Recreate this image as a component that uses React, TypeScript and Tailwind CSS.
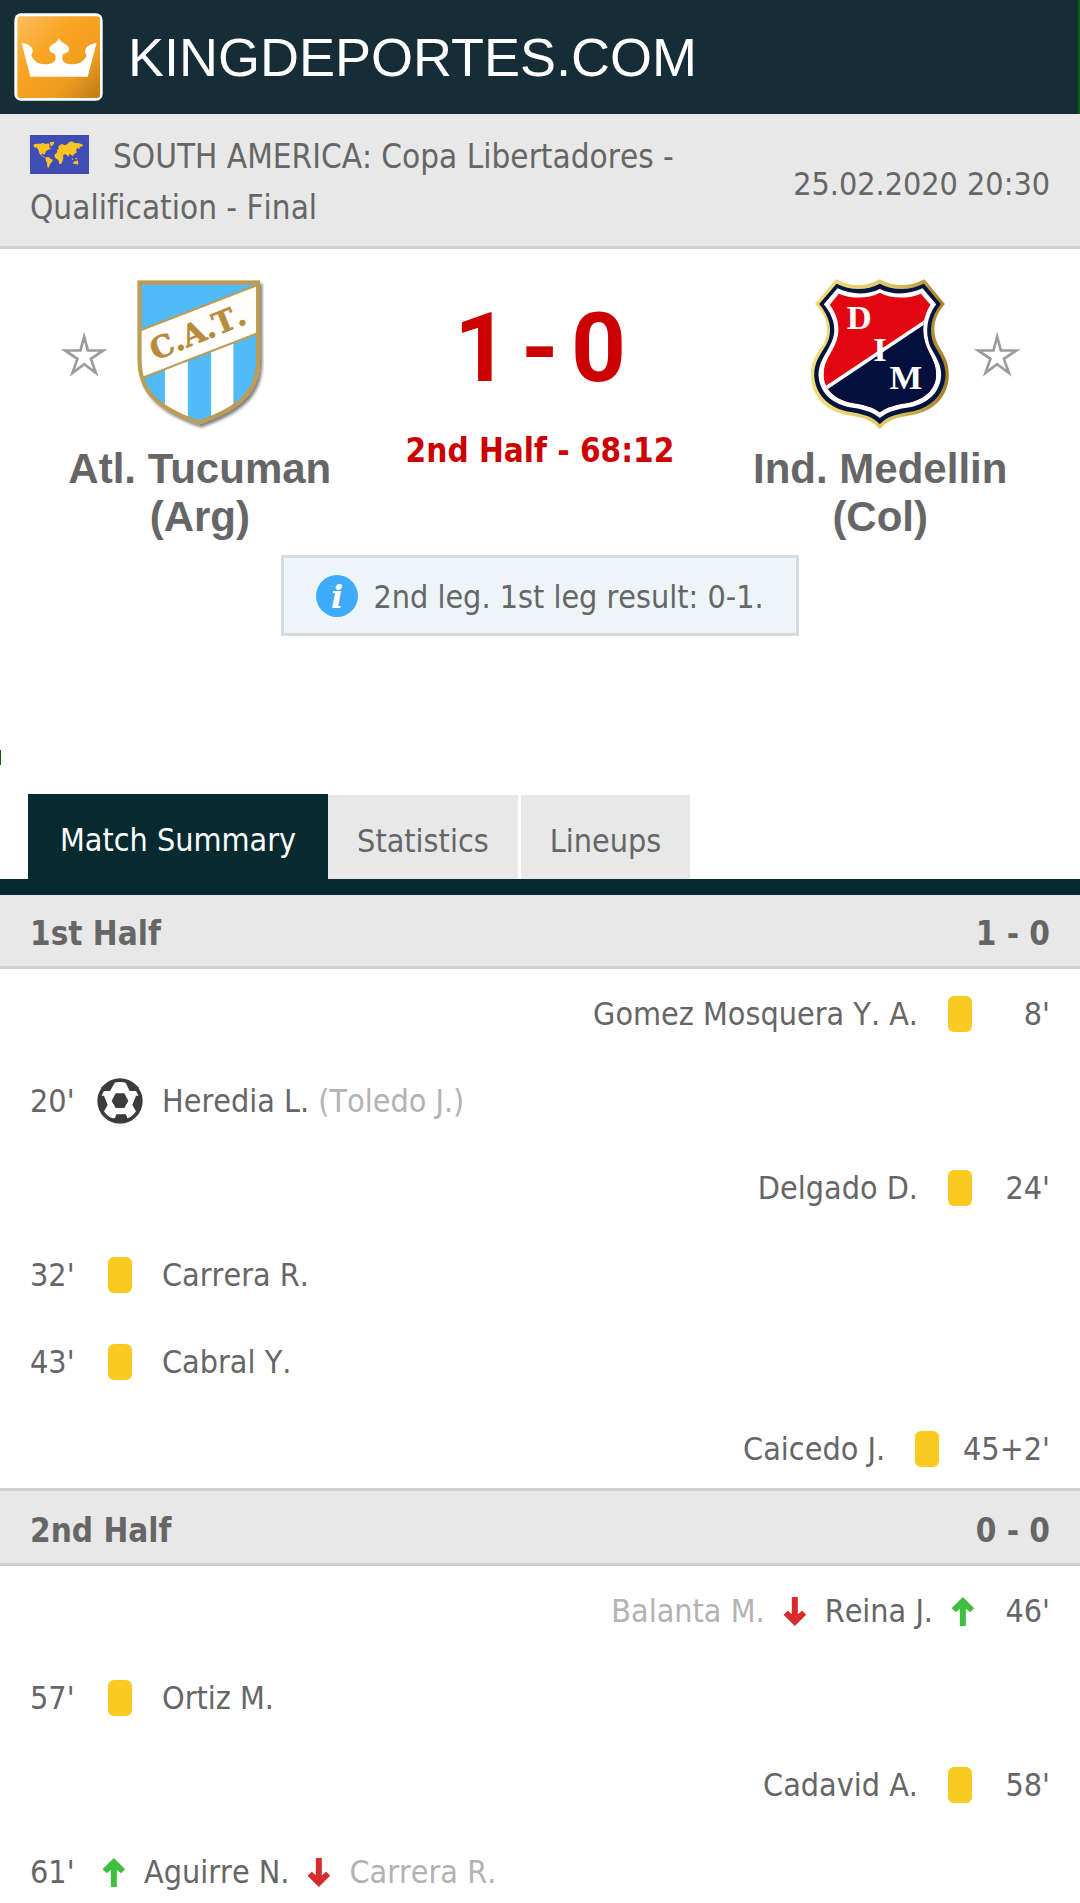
import { useState } from "react";

type EventKind = "yellow" | "goal" | "sub";
type MatchEvent = {
  side: "home" | "away";
  time: string;
  kind: EventKind;
  player: string;
  other?: string;
};
type Half = { title: string; score: string; events: MatchEvent[] };

const halves: Half[] = [
  {
    title: "1st Half",
    score: "1 - 0",
    events: [
      { side: "away", time: "8'", kind: "yellow", player: "Gomez Mosquera Y. A." },
      { side: "home", time: "20'", kind: "goal", player: "Heredia L.", other: "(Toledo J.)" },
      { side: "away", time: "24'", kind: "yellow", player: "Delgado D." },
      { side: "home", time: "32'", kind: "yellow", player: "Carrera R." },
      { side: "home", time: "43'", kind: "yellow", player: "Cabral Y." },
      { side: "away", time: "45+2'", kind: "yellow", player: "Caicedo J." },
    ],
  },
  {
    title: "2nd Half",
    score: "0 - 0",
    events: [
      { side: "away", time: "46'", kind: "sub", player: "Reina J.", other: "Balanta M." },
      { side: "home", time: "57'", kind: "yellow", player: "Ortiz M." },
      { side: "away", time: "58'", kind: "yellow", player: "Cadavid A." },
      { side: "home", time: "61'", kind: "sub", player: "Aguirre N.", other: "Carrera R." },
    ],
  },
];

function CrownLogo() {
  return (
    <svg viewBox="42 39 267 264" className="h-[88px] w-[89px] shrink-0" aria-hidden="true">
      <defs>
        <linearGradient id="gold" x1="0" y1="0" x2="1" y2="1">
          <stop offset="0" stopColor="#fcbf62" />
          <stop offset="0.35" stopColor="#f9a525" />
          <stop offset="0.7" stopColor="#ef9d20" />
          <stop offset="1" stopColor="#bd7a14" />
        </linearGradient>
      </defs>
      <rect x="43" y="40" width="265" height="262" rx="20" fill="#fff" />
      <rect x="52" y="49" width="248" height="245" rx="10" fill="url(#gold)" />
      <path
        fill="#fff"
        d="M65 129C82 131 98 139 98 152C98 160 94 163 94 165C99 182 113 192 133 193C145 194 167 189 167 174C167 164 163 159 157 159C150 156 147 151 148 144C151 133 170 132 177 114C184 132 204 133 207 144C208 152 204 158 197 160C190 160 187 166 187 174C187 189 205 194 219 193C240 192 255 181 260 165C254 161 254 153 257 146C262 136 275 131 290 128L263 230L91 230Z"
      />
    </svg>
  );
}

function WorldFlag() {
  return (
    <svg viewBox="90 405 177 117" className="mr-[24px] inline-block h-[39px] w-[59px] align-[-6px]" aria-hidden="true">
      <rect x="90" y="405" width="177" height="117" fill="#3f4db5" />
      <g fill="#fbc324">
        <path d="M101 433L112 431L121 431L129 429L137 432L145 430L149 434L148 442L153 446L145 449L138 453L136 460L132 464L127 460L124 464L129 469L135 471L138 473L134 473L125 468L119 462L116 452L111 443L102 442Z" />
        <path d="M149 427L163 425L161 432L156 437L152 440L151 433Z" />
        <path d="M137 472L146 471L151 476L158 479L156 486L151 491L146 503L142 501L141 489L137 481Z" />
        <path d="M168 460L172 457L171 450L177 446L174 441L180 434L187 432L193 436L202 433L207 427L216 424L224 429L238 430L250 435L247 439L240 441L237 448L233 443L228 450L231 457L223 461L219 468L214 465L208 462L205 471L200 464L194 463L189 466L190 474L188 482L184 491L178 492L175 480L165 473L163 465Z" />
        <path d="M219 488L225 483L229 484L232 479L235 489L233 495L229 492L221 492Z" />
        <path d="M214 474L221 477L218 480ZM224 474L232 475L231 479Z" />
      </g>
    </svg>
  );
}

function StarButton({ label }: { label: string }) {
  return (
    <button type="button" aria-label={label} className="shrink-0">
      <svg viewBox="60 219 143 134" className="h-[45px] w-[48px]" aria-hidden="true">
        <path
          fill="none"
          stroke="#9c9c9c"
          strokeWidth="8"
          d="M132 233L143 274L189 274L152 299L167 341L132 315L97 341L112 299L75 274L121 274Z"
        />
      </svg>
    </button>
  );
}

function TucumanCrest() {
  return (
    <svg viewBox="285 52 385 462" className="h-[154px] w-[128px]" role="img" aria-label="Atl. Tucuman crest">
      <defs>
        <clipPath id="cat-shield">
          <path d="M296 68H653V300C653 392 602 440 474 490C346 440 296 392 296 300Z" />
        </clipPath>
        <filter id="cat-shadow" x="-10%" y="-10%" width="125%" height="125%">
          <feDropShadow dx="7" dy="9" stdDeviation="4" floodColor="#000" floodOpacity="0.5" />
        </filter>
      </defs>
      <path filter="url(#cat-shadow)" fill="#b99a50" d="M290 62H658V300C658 398 602 450 474 495C346 450 290 398 290 300Z" />
      <g clipPath="url(#cat-shield)">
        <rect x="290" y="60" width="370" height="440" fill="#50bbf8" />
        <rect x="372" y="240" width="69" height="260" fill="#fff" />
        <rect x="511" y="220" width="67" height="280" fill="#fff" />
        <path d="M290 215L660 72V220L290 360Z" fill="#fffefd" />
        <path d="M290 215L660 72M290 360L660 217" stroke="#bc9c55" strokeWidth="6" />
      </g>
      <path
        d="M296 69H652V300C652 393 602 444 474 489C346 444 296 393 296 300Z"
        fill="none"
        stroke="#bd9d56"
        strokeWidth="12"
      />
      <text
        x="342"
        y="303"
        transform="rotate(-22 342 303)"
        fontFamily="'DejaVu Serif', serif"
        fontWeight="bold"
        fontSize="90"
        fill="#b78b3c"
        stroke="#b78b3c"
        strokeWidth="2"
      >
        C.A.T.
      </text>
    </svg>
  );
}

function MedellinCrest() {
  const outline =
    "M285 57C330 82 380 78 417 57C454 78 505 82 551 57L612 131C580 165 572 210 590 250C608 284 624 300 624 345C622 410 580 450 520 463C470 470 440 478 417 507C394 478 364 470 314 463C254 450 212 410 210 345C210 300 226 284 248 250C270 210 258 165 222 131Z";
  const navy =
    "M287 70C330 92 380 90 417 70C454 90 505 92 549 70L600 131C570 168 563 212 579 252C597 286 614 305 614 345C611 402 572 440 518 453C468 461 438 468 417 492C396 468 366 461 316 453C262 440 223 402 220 345C220 305 237 286 257 252C278 212 267 168 235 131Z";
  const white =
    "M290 84C332 104 380 104 417 86C454 104 503 104 545 84L586 132C558 170 552 214 567 256C584 290 601 308 601 345C598 395 564 427 515 439C468 446 438 454 417 473C396 454 366 446 319 439C270 427 236 395 233 345C233 308 250 290 267 256C292 214 280 170 249 132Z";
  const field =
    "M294 100C334 116 382 116 417 97C452 116 502 116 540 100L569 133C545 170 541 214 556 256C570 290 586 308 586 345C584 388 552 415 510 426C466 433 438 440 417 456C396 440 368 433 324 426C282 415 250 388 248 345C248 308 264 290 281 256C302 214 294 170 267 133Z";
  return (
    <svg viewBox="205 50 425 462" className="h-[154px] w-[142px]" role="img" aria-label="Ind. Medellin crest">
      <defs>
        <linearGradient id="dim-gold" x1="0" y1="0" x2="1" y2="0">
          <stop offset="0" stopColor="#f2df7e" />
          <stop offset="0.6" stopColor="#dcc465" />
          <stop offset="1" stopColor="#a37a22" />
        </linearGradient>
        <clipPath id="dim-field">
          <path d={field} />
        </clipPath>
      </defs>
      <path d={outline} fill="url(#dim-gold)" />
      <path d={navy} fill="#03153f" />
      <path d={white} fill="#fff" />
      <g clipPath="url(#dim-field)">
        <rect x="230" y="80" width="370" height="390" fill="#e20613" />
        <path d="M230 400L600 153V480H230Z" fill="#03103e" />
        <path d="M230 400L600 153" stroke="#fff" strokeWidth="11" />
      </g>
      <g fill="#fff" fontFamily="'Liberation Serif', serif" fontWeight="bold" fontSize="104">
        <text x="318" y="206">D</text>
        <text x="397" y="303">I</text>
        <text x="446" y="386">M</text>
      </g>
    </svg>
  );
}

function InfoIcon() {
  return (
    <svg viewBox="0 0 42 42" className="h-[42px] w-[42px] shrink-0" aria-hidden="true">
      <circle cx="21" cy="21" r="21" fill="#3eacfa" />
      <text
        x="21"
        y="33"
        textAnchor="middle"
        fontFamily="'DejaVu Serif', serif"
        fontStyle="italic"
        fontWeight="bold"
        fontSize="32"
        fill="#fff"
      >
        i
      </text>
    </svg>
  );
}

function BallIcon() {
  return (
    <svg viewBox="291 54 138 138" className="h-[46px] w-[46px]" role="img" aria-label="Goal">
      <circle cx="360" cy="123" r="68" fill="#3c3c3c" />
      <circle cx="360" cy="123" r="57" fill="#fff" />
      <g fill="#3c3c3c">
        <path d="M347 100H373L385 122L373 144H347L335 122Z" />
        <path d="M306 93H330L344 69L330 62L304 82Z" />
        <path d="M414 93H389L377 69L390 62L416 82Z" />
        <path d="M303 108L312 107L323 135L312 154L302 148L296 125Z" />
        <path d="M417 108L408 107L397 135L408 154L418 148L424 125Z" />
        <path d="M349 163H378L382 174L390 177L370 188L345 188L330 177L345 174Z" />
      </g>
    </svg>
  );
}

function Arrow({ up }: { up?: boolean }) {
  return (
    <svg
      viewBox="0 0 69 87"
      className="h-[29px] w-[24px] shrink-0"
      role="img"
      aria-label={up ? "Player in" : "Player out"}
    >
      {up ? (
        <path fill="#3fbf3f" d="M34 0L68 34L56 46L43 35V87H25V35L13 46L0 34Z" />
      ) : (
        <path fill="#d62c2c" d="M34 87L68 53L56 41L43 52V0H25V52L13 41L0 53Z" />
      )}
    </svg>
  );
}

function EventRow({ event }: { event: MatchEvent }) {
  const home = event.side === "home";
  return (
    <li className={home ? "flex h-[60px] items-center" : "flex h-[60px] flex-row-reverse items-center"}>
      <span className={home ? "min-w-[66px] pr-[12px]" : "min-w-[66px] pl-[12px] text-right"}>{event.time}</span>
      {event.kind === "sub" ? (
        <span
          className={
            home ? "flex items-center gap-[18px] pl-[6px]" : "flex flex-row-reverse items-center gap-[18px] pr-[9px]"
          }
        >
          <Arrow up />
          <span>{event.player}</span>
          <Arrow />
          <span className="text-[#b2b2b2]">{event.other}</span>
        </span>
      ) : (
        <>
          <span className="flex w-[48px] justify-center">
            {event.kind === "goal" ? (
              <BallIcon />
            ) : (
              <span role="img" aria-label="Yellow card" className="h-[36px] w-[24px] rounded-[6px] bg-[#f9ca1f]" />
            )}
          </span>
          <span className={home ? "pl-[18px]" : "pr-[18px]"}>
            {event.player} {event.other && <span className="text-[#b2b2b2]">{event.other}</span>}
          </span>
        </>
      )}
    </li>
  );
}

const tabs = ["Match Summary", "Statistics", "Lineups"];

export default function App() {
  const [active, setActive] = useState(tabs[0]);
  return (
    <div className="bg-white font-['DejaVu_Sans_Condensed','Noto_Sans',sans-serif] text-[32px] leading-[51px] text-[#666] [font-kerning:none] [font-variant-ligatures:none]">
      <header className="flex h-[114px] items-center border-r-2 border-[#066400] bg-[#162d38] pl-[14px]">
        <a
          href="#"
          className="flex items-center gap-[25px] font-['Liberation_Sans',Arial,sans-serif] text-[54px] text-white [font-kerning:normal]"
        >
          <CrownLogo />
          KINGDEPORTES.COM
        </a>
      </header>

      <div className="flex items-center justify-between border-b-[3px] border-[#cfcfcf] bg-[#e8e8e8] px-[30px] pb-[13px] pt-[17px]">
        <p className="max-w-[680px] text-[33px]">
          <WorldFlag />
          SOUTH AMERICA: Copa Libertadores - Qualification - Final
        </p>
        <time dateTime="2020-02-25T20:30" className="pt-1">
          25.02.2020 20:30
        </time>
      </div>

      <main>
        <section className="grid grid-cols-[37%_1fr_37%] text-center">
          <div className="pt-[28px]">
            <div className="grid grid-cols-[1fr_auto_1fr] items-center gap-[28px]">
              <div className="flex justify-end">
                <StarButton label="Follow Atl. Tucuman" />
              </div>
              <TucumanCrest />
            </div>
            <h2 className="mt-[14px] font-['Liberation_Sans',Arial,sans-serif] text-[42px] font-bold leading-[48px] [font-kerning:normal]">
              Atl. Tucuman
              <br />
              (Arg)
            </h2>
          </div>
          <div className="pt-[51px] font-bold text-[#c00]">
            <p className="flex justify-center gap-[12px] font-['Roboto','Liberation_Sans',sans-serif] text-[96px] leading-[96px]">
              <span>1</span>
              <span>-</span>
              <span>0</span>
            </p>
            <p className="mt-[29px] whitespace-nowrap text-[33px]">2nd Half - 68:12</p>
          </div>
          <div className="pt-[28px]">
            <div className="grid grid-cols-[1fr_auto_1fr] items-center gap-[22px]">
              <div />
              <MedellinCrest />
              <div className="flex justify-start">
                <StarButton label="Follow Ind. Medellin" />
              </div>
            </div>
            <h2 className="mt-[14px] font-['Liberation_Sans',Arial,sans-serif] text-[42px] font-bold leading-[48px] [font-kerning:normal]">
              Ind. Medellin
              <br />
              (Col)
            </h2>
          </div>
        </section>

        <div className="mx-auto mt-[14px] flex h-[81px] w-fit items-center gap-[15px] border-[3px] border-[#d5dde0] bg-[#edf5f9] px-[32px]">
          <InfoIcon />
          <p className="pt-1">2nd leg. 1st leg result: 0-1.</p>
        </div>

        <div className="mt-[114px] h-[15px] w-px bg-[#066400]" />

        <div role="tablist" className="mt-[29px] flex items-end border-b-[16px] border-[#072a30] px-[28px]">
          {tabs.map((tab) => (
            <button
              key={tab}
              type="button"
              role="tab"
              aria-selected={active === tab}
              onClick={() => setActive(tab)}
              className={
                active === tab
                  ? "h-[85px] bg-[#072a30] px-[32px] pt-[8px] text-white"
                  : "mr-[3px] h-[84px] bg-[#e8e8e8] px-[29px] pt-[8px]"
              }
            >
              {tab}
            </button>
          ))}
        </div>

        {halves.map((half, index) => (
          <section key={half.title}>
            <div
              className={
                index === 0
                  ? "flex h-[74px] items-center justify-between border-b-[3px] border-[#cfcfcf] bg-[#e8e8e8] px-[30px] pt-[6px] text-[33px] font-bold"
                  : "flex h-[78px] items-center justify-between border-y-[3px] border-[#cfcfcf] bg-[#e8e8e8] px-[30px] pt-[6px] text-[33px] font-bold"
              }
            >
              <h3>{half.title}</h3>
              <span>{half.score}</span>
            </div>
            <ul
              className={
                index === 0
                  ? "flex flex-col gap-[27px] px-[30px] pb-[9px] pt-[15px]"
                  : "flex flex-col gap-[27px] px-[30px] pt-[15px]"
              }
            >
              {half.events.map((event) => (
                <EventRow key={event.time} event={event} />
              ))}
            </ul>
          </section>
        ))}
      </main>
    </div>
  );
}
